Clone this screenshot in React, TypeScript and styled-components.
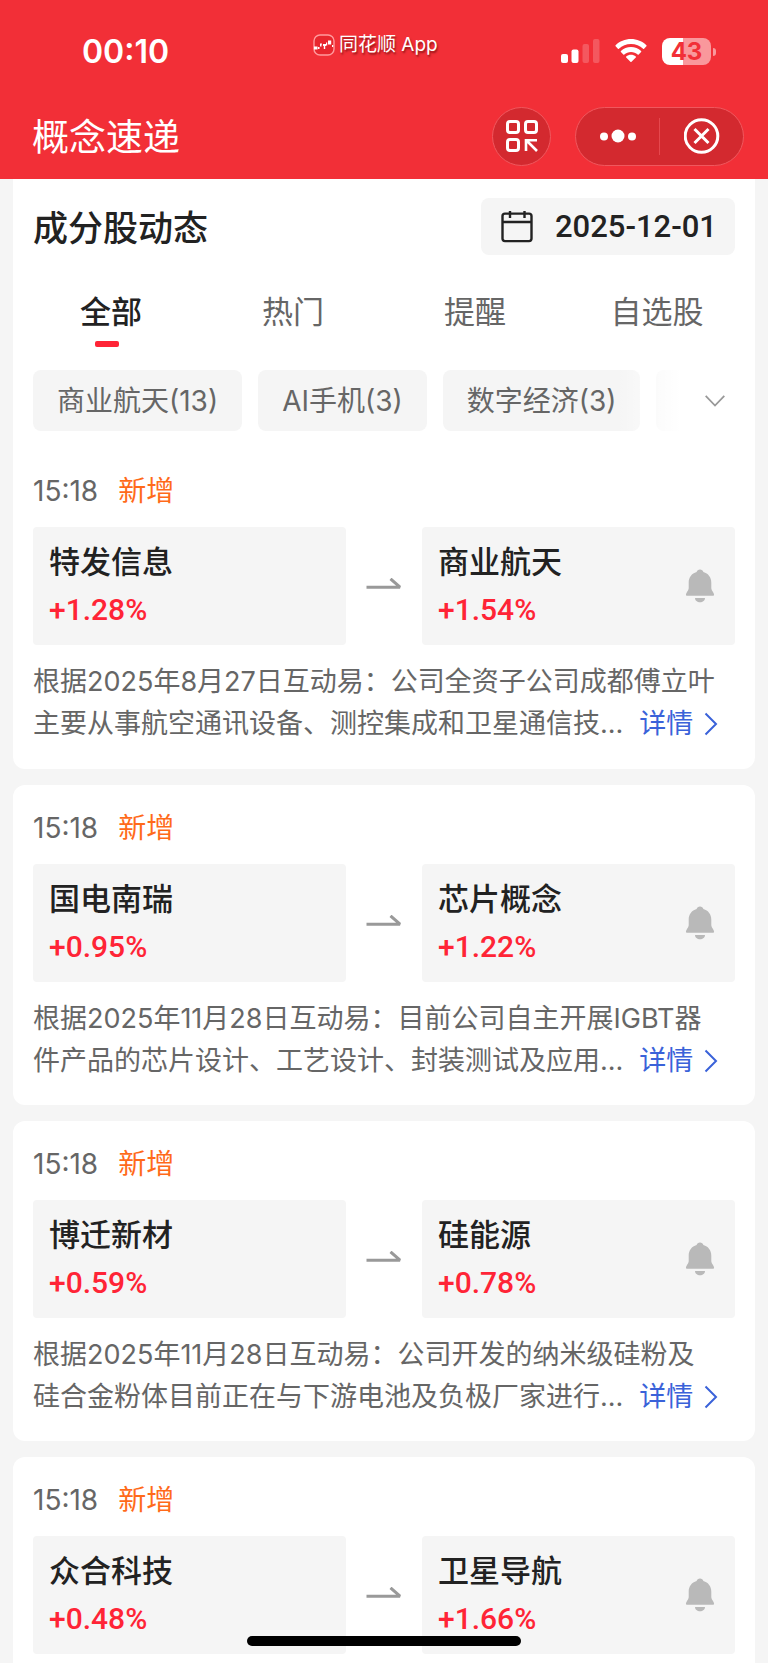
import React from "react";
import styled, { createGlobalStyle } from "styled-components";

const sans = `Inter, "Noto Sans CJK SC", sans-serif`;
const numeric = `Roboto, "Noto Sans CJK SC", sans-serif`;

const GlobalStyle = createGlobalStyle`
  *, *::before, *::after { box-sizing: border-box; }
  body { margin: 0; background: #f5f5f5; font-family: ${sans}; color: #222; }
  button { border: 0; padding: 0; background: none; font: inherit; color: inherit; cursor: pointer; }
  h1, h2, p { margin: 0; }
  svg { display: block; flex: none; }
`;

const Screen = styled.div`
  position: relative;
  height: 100vh;
  overflow: hidden;
  display: flex;
  flex-direction: column;
`;

const Header = styled.header`
  flex: none;
  background: #f22f37;
  color: #fff;
  padding-bottom: 13px;
`;

const StatusBar = styled.div`
  display: grid;
  grid-template-columns: 231px auto 1fr;
  align-items: center;
  height: 106px;
  padding: 0 52px 4px 82px;
`;

const Clock = styled.time`
  padding-top: 2px;
  font-size: 32px;
  font-weight: 600;
  line-height: 40px;
`;

const AppMark = styled.div`
  display: flex;
  align-items: center;
  gap: 4px;
  margin-bottom: 12px;
  font-size: 19px;
  line-height: 24px;
  text-shadow: 1px 2px 2px rgba(80, 0, 0, 0.6);
`;

const StatusIcons = styled.div`
  display: flex;
  align-items: center;
  justify-content: flex-end;
  gap: 14px;
`;

const NavBar = styled.div`
  display: flex;
  align-items: center;
  height: 60px;
  padding: 0 24px 0 32px;
`;

const NavTitle = styled.h1`
  flex: 1;
  padding-top: 4px;
  font-size: 37px;
  font-weight: 400;
  line-height: 56px;
`;

const RoundButton = styled.button`
  display: grid;
  place-items: center;
  width: 59px;
  height: 59px;
  border-radius: 50%;
  background: #d3292f;
  border: 1px solid #f0585e;
`;

const Capsule = styled.div`
  display: flex;
  align-items: center;
  width: 169px;
  height: 59px;
  margin-left: 24px;
  border-radius: 30px;
  background: #d3292f;
  border: 1px solid #f0585e;
`;

const CapsuleButton = styled.button`
  flex: 1;
  height: 100%;
  display: grid;
  place-items: center;
`;

const CapsuleDivider = styled.span`
  width: 1px;
  height: 37px;
  background: #e5484e;
`;

const Feed = styled.main`
  flex: 1;
  min-height: 0;
  overflow: hidden;
  padding: 0 13px;
  display: flex;
  flex-direction: column;
  gap: 16px;
`;

const Card = styled.section<{ $first?: boolean }>`
  flex: none;
  min-height: 320px;
  padding: ${(p) => (p.$first ? "19px 20px 24px" : "22px 20px 23px")};
  background: #fff;
  border-radius: ${(p) => (p.$first ? "0 0 12px 12px" : "12px")};
`;

const TitleRow = styled.div`
  display: flex;
  align-items: center;
  justify-content: space-between;
`;

const SectionTitle = styled.h2`
  padding-top: 4px;
  font-size: 35px;
  font-weight: 500;
  line-height: 53px;
`;

const DateButton = styled.button`
  display: flex;
  align-items: center;
  gap: 21px;
  height: 57px;
  padding: 0 18px 0 20px;
  border-radius: 8px;
  background: #f5f5f5;
  font-family: ${numeric};
  font-size: 31px;
  font-weight: 500;
`;

const Tabs = styled.div`
  display: grid;
  grid-template-columns: repeat(4, 1fr);
  margin: 36px -9px 0 -17px;
`;

const Tab = styled.button<{ $active?: boolean }>`
  display: flex;
  flex-direction: column;
  align-items: center;
  gap: 8px;
  font-size: 31px;
  line-height: 42px;
  font-weight: ${(p) => (p.$active ? 500 : 400)};
  color: ${(p) => (p.$active ? "#222" : "#666")};

  &::after {
    content: "";
    width: 24px;
    height: 6px;
    border-radius: 2px;
    background: ${(p) => (p.$active ? "#ff2436" : "transparent")};
  }
`;

const TabLabel = styled.span`
  padding-left: 8px;
`;

const ChipRow = styled.div`
  display: flex;
  align-items: center;
  margin: 23px 0 39px;
`;

const ChipTrack = styled.div`
  position: relative;
  flex: 1;
  min-width: 0;
  display: flex;
  gap: 16px;
  overflow: hidden;

  &::after {
    content: "";
    position: absolute;
    inset: 0 0 0 auto;
    width: 72px;
    background: linear-gradient(to right, rgba(255, 255, 255, 0), #fff 88%);
  }
`;

const Chip = styled.button`
  flex: none;
  height: 61px;
  padding: 0 24px;
  border-radius: 8px;
  background: #f5f5f5;
  color: #666;
  font-size: 28px;
  line-height: 42px;
  white-space: nowrap;
`;

const ExpandButton = styled.button`
  display: grid;
  place-items: center;
  width: 46px;
  height: 61px;
  padding-left: 6px;
`;

const Meta = styled.div`
  display: flex;
  gap: 20px;
  font-size: 28px;
  line-height: 42px;
  color: #666;
`;

const Flag = styled.span`
  color: #ff6a1a;
`;

const Pair = styled.div`
  display: grid;
  grid-template-columns: 1fr 76px 1fr;
  align-items: center;
  margin-top: 15px;
`;

const ArrowCell = styled.div`
  display: grid;
  place-items: center;
`;

const Tile = styled.div`
  display: flex;
  align-items: center;
  justify-content: space-between;
  height: 118px;
  padding: 0 20px 0 16px;
  border-radius: 4px;
  background: #f5f5f5;
`;

const TileText = styled.div`
  display: flex;
  flex-direction: column;
  gap: 8px;
`;

const Name = styled.span`
  font-size: 31px;
  font-weight: 500;
  line-height: 40px;
`;

const Change = styled.span`
  font-family: ${numeric};
  font-size: 30px;
  font-weight: 500;
  line-height: 40px;
  color: #ff2436;
`;

const Summary = styled.p`
  margin-top: 16px;
  font-size: 27px;
  line-height: 42px;
  color: #666;
  white-space: nowrap;
`;

const SummaryLine = styled.span`
  display: flex;
`;

const DetailLink = styled.a`
  display: inline-flex;
  align-items: center;
  gap: 11px;
  margin-left: 16px;
  color: #3a62d9;
  text-decoration: none;
`;

const HomeIndicator = styled.div`
  position: absolute;
  left: 50%;
  bottom: 17px;
  width: 274px;
  height: 10px;
  margin-left: -137px;
  border-radius: 5px;
  background: #000;
`;

const BatteryBox = styled.span`
  position: relative;
  display: grid;
  place-items: center;
  width: 49px;
  height: 27px;
  margin: 0 5px 0 0;
  border-radius: 8px;
  background: linear-gradient(to right, #fff 43%, #f9989c 43%);
  color: #f22f37;
  font-size: 24px;
  font-weight: 700;
  line-height: 27px;

  &::after {
    content: "";
    position: absolute;
    right: -5px;
    top: 10px;
    width: 3px;
    height: 8px;
    border-radius: 0 4px 4px 0;
    background: #f9989c;
  }
`;

const AppLogo = () => (
  <svg width="22" height="22" viewBox="0 0 22 22" fill="none">
    <rect x="1" y="1" width="20" height="20" rx="6" fill="#e8262e" stroke="#ff9a9d" strokeWidth="1.4" />
    <path d="M1 12.500h3.500v3H1zM5 13h1.500v2H5zM7 9.500h2v1H8.500v2H7zM10 10h3v2h-.8v3h-1.400v-3H10zM13 8.500h1.200v3H13zM15 6.500h3.200v4H15zM19 11h1.200v2H19z" fill="#fff" />
  </svg>
);

const SignalIcon = () => (
  <svg width="39" height="24" viewBox="0 0 39 24" fill="#fff">
    <rect y="15" width="7" height="9" rx="2" />
    <rect x="10.500" y="10.500" width="7" height="13.500" rx="2" />
    <rect x="21.500" y="5" width="6.500" height="19" rx="2" opacity=".2" />
    <rect x="32" width="6.500" height="24" rx="2" opacity=".2" />
  </svg>
);

const WifiIcon = () => (
  <svg width="34" height="25" viewBox="0 0 34 25" fill="#fff">
    <path d="M17 4.9c4.7 0 8.9 1.8 12.1 4.8.3.3.7.3 1 0l2.3-2.4c.3-.3.3-.8 0-1.1C28.400 2.300 22.900 0 17 0S5.600 2.300 1.600 6.200c-.3.3-.3.8 0 1.100l2.300 2.400c.3.3.7.3 1 0 3.200-3 7.400-4.800 12.100-4.800z" />
    <path d="M17 12.900c2.600 0 4.900 1 6.700 2.600.3.3.7.3 1 0l2.400-2.400c.3-.3.3-.8 0-1.100C24.400 9.500 20.900 8 17 8s-7.400 1.500-10.100 4c-.3.3-.3.8 0 1.100l2.400 2.400c.3.3.7.3 1 0 1.800-1.600 4.100-2.600 6.700-2.600z" />
    <path d="M21.800 18.400c.3-.3.3-.8 0-1-1.300-1.100-3-1.700-4.800-1.700s-3.500.6-4.800 1.700c-.3.3-.3.700 0 1l4.200 4.300c.3.300.8.300 1.100 0z" />
  </svg>
);

const ScanIcon = () => (
  <svg width="32" height="32" viewBox="0 0 32 32" fill="none" stroke="#fff" strokeWidth="3">
    <rect x="1.500" y="1.500" width="11" height="11" rx="2.500" />
    <rect x="19.500" y="1.500" width="11" height="11" rx="2.500" />
    <rect x="1.500" y="19.500" width="11" height="11" rx="2.500" />
    <path d="M20 31V20.300H31M20.500 20.500l10.500 10.500" strokeWidth="2.600" />
  </svg>
);

const MoreIcon = () => (
  <svg width="38" height="14" viewBox="0 0 38 14" fill="#fff">
    <circle cx="5" cy="7.500" r="4" />
    <circle cx="19" cy="7" r="6.500" />
    <circle cx="33" cy="7.500" r="4" />
  </svg>
);

const CloseIcon = () => (
  <svg width="36" height="36" viewBox="0 0 36 36" fill="none" stroke="#fff" strokeWidth="3">
    <circle cx="17.500" cy="18" r="16.300" />
    <path d="M10.500 11l14 14M24.500 11l-14 14" />
  </svg>
);

const CalendarIcon = () => (
  <svg width="33" height="33" viewBox="0 0 33 33" fill="none" stroke="#222" strokeWidth="2.400">
    <rect x="1.500" y="3.600" width="29" height="27.500" rx="2.500" />
    <path d="M1.500 12h29M9 1v7M23.500 1v7" />
  </svg>
);

const ChevronDown = () => (
  <svg width="20" height="12" viewBox="0 0 20 12" fill="none" stroke="#999" strokeWidth="1.800">
    <path d="M.7.800L10 10.500 19.300.800" />
  </svg>
);

const ChevronRight = () => (
  <svg width="14" height="24" viewBox="0 0 14 24" fill="none" stroke="#3a62d9" strokeWidth="2">
    <path d="M1.500 1.500L12 12 1.500 22.500" />
  </svg>
);

const HalfArrow = () => (
  <svg width="36" height="16" viewBox="0 0 36 16" fill="none" stroke="#999" strokeWidth="3">
    <path d="M.5 9.200H34L24.500.800" strokeLinejoin="bevel" />
  </svg>
);

const BellIcon = () => (
  <svg width="30" height="34" viewBox="0 0 30 34" fill="#b9b9b9">
    <path d="M15 .5c1.700 0 3 1 3.400 2.600C23.300 4.500 26.300 8.600 26.300 13.500v5.800c0 2.200 2.800 4.400 2.800 6.500 0 .6-.4.900-1 .9H1.900c-.6 0-1-.3-1-.9 0-2.100 2.800-4.300 2.800-6.500v-5.800C3.700 8.600 6.700 4.500 11.600 3.100 12 1.500 13.300.5 15 .5z" />
    <path d="M10 29h10c0 2.500-2.200 4.300-5 4.300s-5-1.800-5-4.300z" />
  </svg>
);

interface Entry {
  stock: string;
  stockChange: string;
  concept: string;
  conceptChange: string;
  summary?: [string, string];
}

const entries: Entry[] = [
  {
    stock: "特发信息",
    stockChange: "+1.28%",
    concept: "商业航天",
    conceptChange: "+1.54%",
    summary: ["根据2025年8月27日互动易：公司全资子公司成都傅立叶", "主要从事航空通讯设备、测控集成和卫星通信技..."],
  },
  {
    stock: "国电南瑞",
    stockChange: "+0.95%",
    concept: "芯片概念",
    conceptChange: "+1.22%",
    summary: ["根据2025年11月28日互动易：目前公司自主开展IGBT器", "件产品的芯片设计、工艺设计、封装测试及应用..."],
  },
  {
    stock: "博迁新材",
    stockChange: "+0.59%",
    concept: "硅能源",
    conceptChange: "+0.78%",
    summary: ["根据2025年11月28日互动易：公司开发的纳米级硅粉及", "硅合金粉体目前正在与下游电池及负极厂家进行..."],
  },
  { stock: "众合科技", stockChange: "+0.48%", concept: "卫星导航", conceptChange: "+1.66%" },
];

const EntryBody = ({ entry }: { entry: Entry }) => (
  <>
    <Meta>
      <time>15:18</time>
      <Flag>新增</Flag>
    </Meta>
    <Pair>
      <Tile>
        <TileText>
          <Name>{entry.stock}</Name>
          <Change>{entry.stockChange}</Change>
        </TileText>
      </Tile>
      <ArrowCell>
        <HalfArrow />
      </ArrowCell>
      <Tile>
        <TileText>
          <Name>{entry.concept}</Name>
          <Change>{entry.conceptChange}</Change>
        </TileText>
        <button aria-label="提醒">
          <BellIcon />
        </button>
      </Tile>
    </Pair>
    {entry.summary && (
      <Summary>
        <SummaryLine>{entry.summary[0]}</SummaryLine>
        <SummaryLine>
          {entry.summary[1]}
          <DetailLink href="#">
            详情
            <ChevronRight />
          </DetailLink>
        </SummaryLine>
      </Summary>
    )}
  </>
);

const tabs = ["全部", "热门", "提醒", "自选股"];
const chips = ["商业航天(13)", "AI手机(3)", "数字经济(3)"];

export default function App() {
  const [first, ...rest] = entries;
  return (
    <Screen>
      <GlobalStyle />
      <Header>
        <StatusBar>
          <Clock>00:10</Clock>
          <AppMark>
            <AppLogo />
            <span>同花顺 App</span>
          </AppMark>
          <StatusIcons>
            <SignalIcon />
            <WifiIcon />
            <BatteryBox>43</BatteryBox>
          </StatusIcons>
        </StatusBar>
        <NavBar>
          <NavTitle>概念速递</NavTitle>
          <RoundButton aria-label="扫码">
            <ScanIcon />
          </RoundButton>
          <Capsule>
            <CapsuleButton aria-label="更多">
              <MoreIcon />
            </CapsuleButton>
            <CapsuleDivider />
            <CapsuleButton aria-label="关闭">
              <CloseIcon />
            </CapsuleButton>
          </Capsule>
        </NavBar>
      </Header>
      <Feed>
        <Card $first>
          <TitleRow>
            <SectionTitle>成分股动态</SectionTitle>
            <DateButton>
              <CalendarIcon />
              2025-12-01
            </DateButton>
          </TitleRow>
          <Tabs role="tablist">
            {tabs.map((label, i) => (
              <Tab key={label} role="tab" aria-selected={i === 0} $active={i === 0}>
                <TabLabel>{label}</TabLabel>
              </Tab>
            ))}
          </Tabs>
          <ChipRow>
            <ChipTrack>
              {chips.map((label) => (
                <Chip key={label}>{label}</Chip>
              ))}
              <Chip aria-label="更多概念" />
            </ChipTrack>
            <ExpandButton aria-label="展开">
              <ChevronDown />
            </ExpandButton>
          </ChipRow>
          <EntryBody entry={first} />
        </Card>
        {rest.map((entry) => (
          <Card key={entry.stock}>
            <EntryBody entry={entry} />
          </Card>
        ))}
      </Feed>
      <HomeIndicator />
    </Screen>
  );
}
